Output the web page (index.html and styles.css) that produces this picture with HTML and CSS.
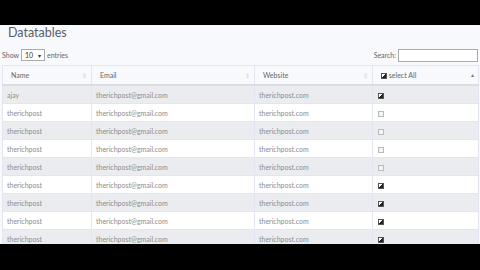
FILE: index.html
```html
<!DOCTYPE html>
<html lang="en">
<head>
  <meta charset="UTF-8" />
  <meta name="viewport" content="width=device-width, initial-scale=1.0"/>
  <title>Datatables</title>
  <link rel="stylesheet" href="styles.css">
</head>
<body>
  <div class="screen">
    <h2>Datatables</h2>

    <!-- Top controls -->
    <div class="controls">
      <div class="length">
        Show
        <span class="select">10 <span class="caret">&#9662;</span></span>
        entries
      </div>
      <div class="search">
        Search:
        <span class="search-box"></span>
      </div>
    </div>

    <!-- Table -->
    <table class="data">
      <colgroup>
        <col class="c-name">
        <col class="c-email">
        <col class="c-web">
        <col class="c-check">
      </colgroup>
      <thead>
        <tr>
          <th>Name <span class="sort">&#8661;</span></th>
          <th>Email <span class="sort">&#8661;</span></th>
          <th>Website <span class="sort">&#8661;</span></th>
          <th><span class="cb on"></span> select All <span class="sort up">&#9652;</span></th>
        </tr>
      </thead>
      <tbody>
        <tr><td>ajay</td><td>therichpost@gmail.com</td><td>therichpost.com</td><td><span class="cb on"></span></td></tr>
        <tr><td>therichpost</td><td>therichpost@gmail.com</td><td>therichpost.com</td><td><span class="cb"></span></td></tr>
        <tr><td>therichpost</td><td>therichpost@gmail.com</td><td>therichpost.com</td><td><span class="cb"></span></td></tr>
        <tr><td>therichpost</td><td>therichpost@gmail.com</td><td>therichpost.com</td><td><span class="cb"></span></td></tr>
        <tr><td>therichpost</td><td>therichpost@gmail.com</td><td>therichpost.com</td><td><span class="cb"></span></td></tr>
        <tr><td>therichpost</td><td>therichpost@gmail.com</td><td>therichpost.com</td><td><span class="cb on"></span></td></tr>
        <tr><td>therichpost</td><td>therichpost@gmail.com</td><td>therichpost.com</td><td><span class="cb on"></span></td></tr>
        <tr><td>therichpost</td><td>therichpost@gmail.com</td><td>therichpost.com</td><td><span class="cb on"></span></td></tr>
        <tr><td>therichpost</td><td>therichpost@gmail.com</td><td>therichpost.com</td><td><span class="cb on"></span></td></tr>
      </tbody>
    </table>
  </div>
</body>
</html>
```

FILE: styles.css
```css
body {
  margin: 0;
  padding: 0;
  background: #000;
  font-family: 'Lato', sans-serif;
  color: #858585;
}
.screen {
  margin-top: 25px;
  height: 219px;
  background: #f8f9fc;
  overflow: hidden;
}
h2 {
  margin: 0;
  padding: 1px 0 0 8px;
  height: 21px;
  line-height: 14px;
  font-size: 12.5px;
  font-weight: 400;
  color: #5a5c69;
}
.controls {
  display: flex;
  justify-content: space-between;
  align-items: center;
  height: 14px;
  margin-top: 1px;
  padding: 0 2px;
  font-size: 7px;
  color: #666;
}
.length, .search {
  display: flex;
  align-items: center;
  gap: 2px;
}
.select {
  display: inline-flex;
  justify-content: space-between;
  align-items: center;
  width: 24px;
  height: 12px;
  box-sizing: border-box;
  padding: 0 3px;
  border: 1px solid #aaa;
  background: #fff;
  color: #333;
}
.caret {
  font-size: 6px;
}
.search-box {
  display: inline-block;
  width: 80px;
  height: 13px;
  box-sizing: border-box;
  border: 1px solid #aaa;
  background: #fff;
}
.data {
  margin: 3px 0 0 2px;
  width: 476px;
  border-collapse: collapse;
  table-layout: fixed;
  font-size: 7px;
  border-left: 1px solid #e3e6f0;
  border-right: 1px solid #e3e6f0;
}
.c-name { width: 89px; }
.c-email { width: 163px; }
.c-web { width: 118px; }
.c-check { width: 106px; }
.data th {
  height: 18px;
  text-align: left;
  font-weight: 400;
  color: #666;
  border-top: 1px solid #e3e6f0;
  border-bottom: 2px solid #dcdde3;
  border-right: 1px solid #e3e6f0;
  padding: 0 4px 0 8px;
  position: relative;
}
.sort {
  position: absolute;
  right: 4px;
  top: 6px;
  font-size: 6px;
  color: #d0d0d5;
}
.sort.up {
  color: #777;
  top: 5px;
}
.data td {
  height: 17px;
  padding: 0 4px;
  border-top: 1px solid #e3e6f0;
  border-right: 1px solid #e3e6f0;
  white-space: nowrap;
  overflow: hidden;
  color: #8c8c8c;
}
.data tbody tr:nth-child(odd) td {
  background: #ebecef;
}
.data tbody tr:nth-child(even) td {
  background: #fff;
}
.data td:last-child {
  padding-left: 5px;
}
.cb {
  display: inline-block;
  width: 4px;
  height: 4px;
  border: 1px solid #bbb;
  background: #f4f4f4;
  vertical-align: middle;
  position: relative;
}
.cb.on {
  border-color: #555;
  background: #fff;
}
.cb.on::after {
  content: '';
  position: absolute;
  left: 0;
  top: 0;
  width: 4px;
  height: 4px;
  background: linear-gradient(135deg, transparent 45%, #222 45%);
}
```
